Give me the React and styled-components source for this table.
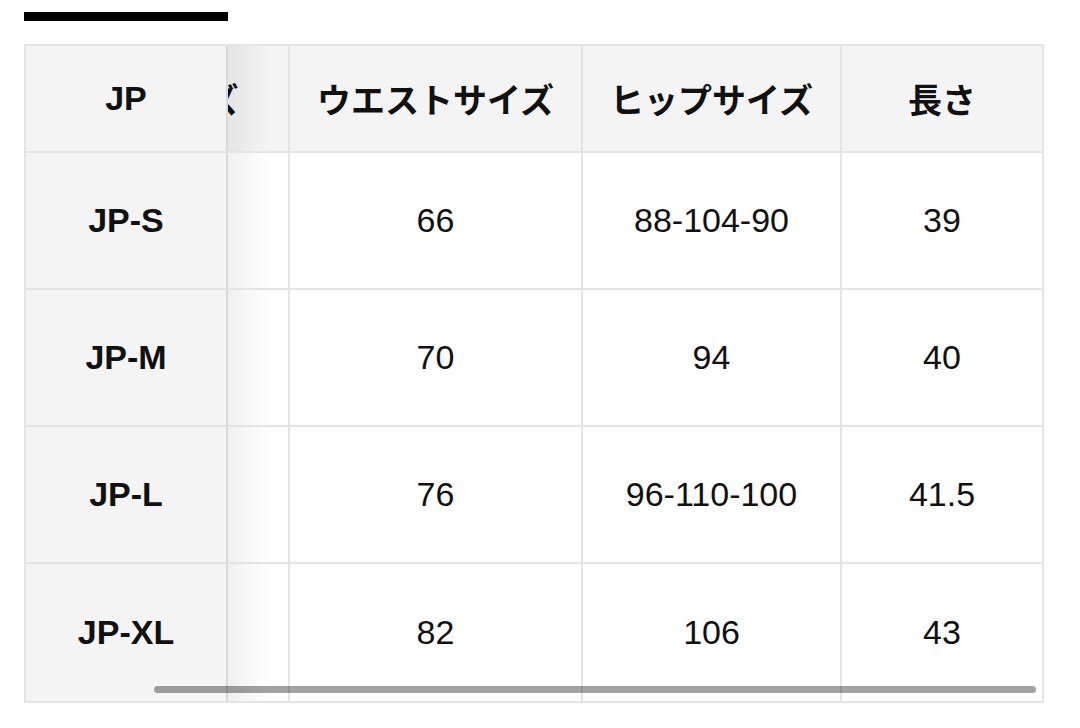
import React, { useLayoutEffect, useRef } from 'react'
import styled, { createGlobalStyle } from 'styled-components'

const GlobalStyle = createGlobalStyle`
  html, body {
    margin: 0;
    padding: 0;
    background: #fff;
  }
  body {
    font-family: "Liberation Sans", "Noto Sans CJK JP", sans-serif;
    color: #111;
  }
`

const Page = styled.div`
  padding: 12px 24px;
`

const TitleBar = styled.div`
  width: 204px;
  height: 9px;
  background: #000;
  margin-bottom: 23px;
`

const Frame = styled.div`
  position: relative;
  width: 1016px;
  border: 2px solid #e4e4e4;
`

const Scroller = styled.div`
  overflow-x: auto;
  scrollbar-width: none;
  &::-webkit-scrollbar {
    display: none;
  }
`

const Table = styled.table`
  border-collapse: separate;
  border-spacing: 0;
  table-layout: fixed;
  width: 1156px;
`

const Cell = styled.td`
  box-sizing: border-box;
  width: ${p => p.$w}px;
  height: ${p => (p.$head ? 107 : 137)}px;
  padding: 0;
  text-align: center;
  vertical-align: middle;
  font-size: 34px;
  font-weight: ${p => (p.$head ? 700 : 400)};
  background: ${p => (p.$head ? '#f4f4f4' : '#fff')};
  border-right: ${p => (p.$last ? 'none' : '2px solid #e4e4e4')};
  border-bottom: ${p => (p.$bottom ? 'none' : '2px solid #e4e4e4')};
  white-space: nowrap;
  overflow: hidden;
`

const StickyCell = styled(Cell)`
  position: sticky;
  left: 0;
  z-index: 2;
  font-weight: 700;
  background: #f4f4f4;
  border-right: 2px solid #d9d9d9;
  overflow: visible;

  &::after {
    content: '';
    position: absolute;
    top: 0;
    bottom: 0;
    right: -44px;
    width: 42px;
    background: linear-gradient(to right, rgba(0, 0, 0, 0.06), rgba(0, 0, 0, 0));
    pointer-events: none;
  }
`

const Thumb = styled.div`
  position: absolute;
  left: 128px;
  bottom: 8px;
  width: 882px;
  height: 7px;
  border-radius: 4px;
  background: rgba(0, 0, 0, 0.36);
  z-index: 3;
`

const columns = [
  { key: 'size', label: 'サイズ', w: 202 },
  { key: 'waist', label: 'ウエストサイズ', w: 293 },
  { key: 'hip', label: 'ヒップサイズ', w: 259 },
  { key: 'length', label: '長さ', w: 200 }
]

const rows = [
  { jp: 'JP-S', waist: '66', hip: '88-104-90', length: '39' },
  { jp: 'JP-M', waist: '70', hip: '94', length: '40' },
  { jp: 'JP-L', waist: '76', hip: '96-110-100', length: '41.5' },
  { jp: 'JP-XL', waist: '82', hip: '106', length: '43' }
]

export default function App() {
  const scroller = useRef(null)

  // the table sits scrolled to its right end, as in the capture
  useLayoutEffect(() => {
    const el = scroller.current
    if (el) el.scrollLeft = el.scrollWidth - el.clientWidth
  }, [])

  return (
    <Page>
      <GlobalStyle />
      <TitleBar />
      <Frame>
        <Scroller ref={scroller}>
          <Table>
            <thead>
              <tr>
                <StickyCell as="th" $head $w={202}>JP</StickyCell>
                {columns.map((c, i) => (
                  <Cell as="th" key={c.key} $head $w={c.w} $last={i === columns.length - 1}>
                    {c.label}
                  </Cell>
                ))}
              </tr>
            </thead>
            <tbody>
              {rows.map((r, ri) => {
                const bottom = ri === rows.length - 1
                return (
                  <tr key={r.jp}>
                    <StickyCell $w={202} $bottom={bottom}>{r.jp}</StickyCell>
                    {columns.map((c, i) => (
                      <Cell key={c.key} $w={c.w} $bottom={bottom} $last={i === columns.length - 1}>
                        {r[c.key] || ''}
                      </Cell>
                    ))}
                  </tr>
                )
              })}
            </tbody>
          </Table>
        </Scroller>
        <Thumb />
      </Frame>
    </Page>
  )
}
